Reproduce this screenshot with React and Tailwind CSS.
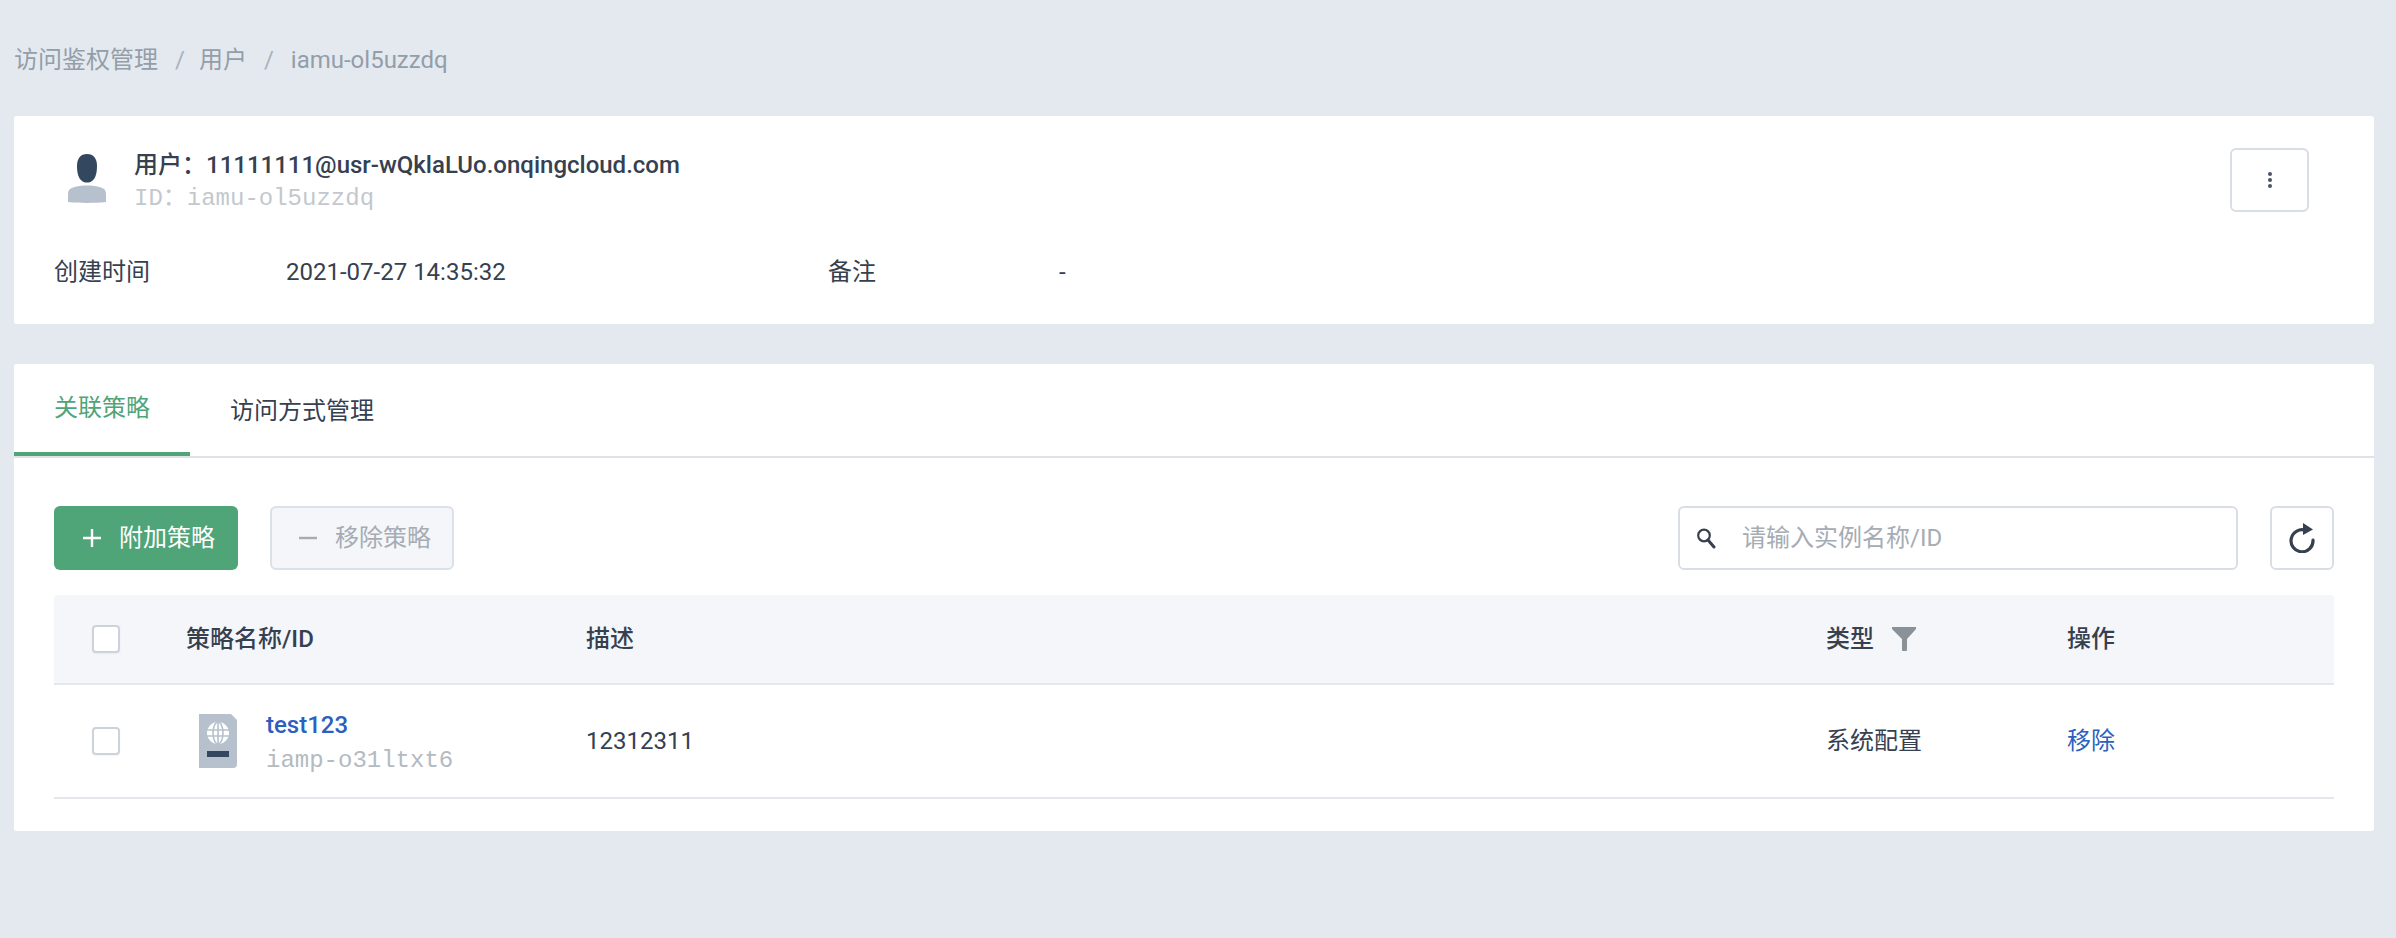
import React from "react";

const Person = () => (
  <svg width="40" height="52" viewBox="0 0 40 52" className="block">
    <path d="M20 0c6.500 0 10 4.500 10 12 0 8-2 13-5 15-1.500 1-3 1.500-5 1.500s-3.500-.5-5-1.500c-3-2-5-7-5-15C10 4.500 13.500 0 20 0z" fill="#33475f" />
    <path d="M1 48V40c0-3.500 1.500-5.500 5-6.500 4.500-1.500 9-2 14-2s9.500.5 14 2c3.500 1 5 3 5 6.500v8c-12 1.200-26 1.200-38 0z" fill="#b6c1cd" />
  </svg>
);

const Passport = () => (
  <svg width="38" height="54" viewBox="0 0 38 54" className="block">
    <path d="M0 0h32l6 6v44a4 4 0 0 1-4 4H0z" fill="#b6c1cd" />
    <circle cx="19" cy="19" r="11" fill="#fff" />
    <g fill="none" stroke="#b6c1cd" strokeWidth="1.600">
      <ellipse cx="19" cy="19" rx="5" ry="11" />
      <path d="M8 16h22M8 22h22M19 8v22" />
    </g>
    <rect x="8" y="37" width="22" height="6" fill="#33475f" />
  </svg>
);

const Kebab = () => (
  <svg width="6" height="18" viewBox="0 0 6 18" className="block">
    <circle cx="3" cy="3" r="2" fill="#4a5463" />
    <circle cx="3" cy="9" r="2" fill="#4a5463" />
    <circle cx="3" cy="15" r="2" fill="#4a5463" />
  </svg>
);

const Search = () => (
  <svg width="20" height="22" viewBox="0 0 20 22" className="block shrink-0">
    <circle cx="8" cy="8.500" r="5.800" fill="none" stroke="#36404f" strokeWidth="2.200" />
    <path d="M12 13l6 7" stroke="#36404f" strokeWidth="3" strokeLinecap="round" />
  </svg>
);

const Refresh = () => (
  <svg width="28" height="30" viewBox="0 0 28 30" className="block">
    <path d="M18 7.500A11 11 0 1 0 25 17" fill="none" stroke="#36404f" strokeWidth="3.200" strokeLinecap="round" />
    <path d="M15 0l10 6.500-10 5.500z" fill="#36404f" />
  </svg>
);

const Funnel = () => (
  <svg width="24" height="24" viewBox="0 0 24 24" className="block">
    <path d="M0 0h24v2L15 12v11a1 1 0 0 1-1 1h-3a1 1 0 0 1-1-1V12L0 2z" fill="#8b9199" />
  </svg>
);

const Check = () => (
  <div className="w-[28px] h-[28px] rounded-[4px] border-2 border-[#ccd3db] bg-white shadow-[0_1px_2px_rgba(0,0,0,0.05)] shrink-0" />
);

export default function App() {
  return (
    <div className="min-h-screen bg-[#e4e9f0] pl-[14px] pr-[22px] pt-[44px] text-[24px] text-[#36404f] font-['Roboto','Noto_Sans_CJK_SC',sans-serif] leading-[32px]">
      <div className="flex items-center h-[32px] mb-[40px] text-[#939ea9]">
        <span>访问鉴权管理</span>
        <span className="ml-[17px] mr-[14px] text-[#a9b2bc]">/</span>
        <span>用户</span>
        <span className="mx-[17px] text-[#a9b2bc]">/</span>
        <span>iamu-ol5uzzdq</span>
      </div>

      <section className="bg-white rounded-[3px] h-[208px] pt-[32px] pl-[40px] pr-[65px]">
        <div className="flex items-start justify-between h-[92px]">
          <div className="flex items-start pl-[13px] pt-[6px]">
            <Person />
            <div className="ml-[27px] -mt-[5px]">
              <div className="font-medium leading-[33px]">用户：11111111@usr-wQklaLUo.onqingcloud.com</div>
              <div className="leading-[33px] text-[#c2c8ce] font-['Liberation_Mono','Noto_Sans_CJK_SC',monospace] text-[24px]">ID：iamu-ol5uzzdq</div>
            </div>
          </div>
          <button className="w-[79px] h-[64px] rounded-[6px] border-2 border-[#d9dee4] bg-white flex items-center justify-center">
            <Kebab />
          </button>
        </div>
        <div className="flex items-center h-[32px] mt-[16px]">
          <span className="w-[232px]">创建时间</span>
          <span className="w-[542px]">2021-07-27 14:35:32</span>
          <span className="w-[231px]">备注</span>
          <span>-</span>
        </div>
      </section>

      <section className="mt-[40px] bg-white rounded-[3px] h-[467px]">
        <div className="flex h-[94px] border-b-2 border-[#dfe3e7]">
          <div className="w-[176px] h-[92px] flex items-center justify-center border-b-4 border-[#4fa478] text-[#4fa478]">关联策略</div>
          <div className="ml-[40px] h-[92px] flex items-center pt-[2px]">访问方式管理</div>
        </div>

        <div className="px-[40px] pt-[48px]">
          <div className="flex items-center">
            <button className="w-[184px] h-[64px] rounded-[6px] bg-[#4fa478] text-white flex items-center pl-[28px] gap-[17px]">
              <svg width="20" height="20" viewBox="0 0 20 20" className="block">
                <path d="M10 1v18M1 10h18" stroke="#fff" strokeWidth="2.400" />
              </svg>
              <span>附加策略</span>
            </button>
            <button className="ml-[32px] w-[184px] h-[64px] rounded-[6px] bg-[#f4f6f9] border-2 border-[#dbe1e8] text-[#a5acb4] flex items-center pl-[26px] gap-[17px]">
              <svg width="20" height="20" viewBox="0 0 20 20" className="block">
                <path d="M1 10h18" stroke="#a5acb4" strokeWidth="2.400" />
              </svg>
              <span>移除策略</span>
            </button>
            <div className="ml-auto w-[560px] h-[64px] rounded-[6px] border-2 border-[#d9dee4] bg-white flex items-center pl-[16px]">
              <Search />
              <span className="ml-[26px] text-[#a5acb4]">请输入实例名称/ID</span>
            </div>
            <button className="ml-[32px] w-[64px] h-[64px] rounded-[6px] border-2 border-[#d9dee4] bg-white flex items-center justify-center">
              <Refresh />
            </button>
          </div>

          <div className="mt-[25px] h-[90px] bg-[#f4f6f9] border-b-2 border-[#e4e8ec] rounded-t-[3px] flex items-center font-medium">
            <div className="w-[132px] pl-[38px]"><Check /></div>
            <div className="w-[400px]">策略名称/ID</div>
            <div className="w-[1240px]">描述</div>
            <div className="w-[241px] flex items-center gap-[18px]">
              <span>类型</span>
              <Funnel />
            </div>
            <div>操作</div>
          </div>

          <div className="h-[114px] border-b-2 border-[#e4e8ec] flex items-center">
            <div className="w-[145px] pl-[38px]"><Check /></div>
            <div className="w-[387px] flex items-center">
              <Passport />
              <div className="ml-[29px] pt-[4px]">
                <div className="text-[#2b5fc0] font-medium leading-[35px]">test123</div>
                <div className="text-[#b4bac1] font-['Liberation_Mono',monospace] text-[24px] leading-[35px]">iamp-o31ltxt6</div>
              </div>
            </div>
            <div className="w-[1240px]">12312311</div>
            <div className="w-[241px]">系统配置</div>
            <div className="text-[#2b5fc0]">移除</div>
          </div>
        </div>
      </section>
    </div>
  );
}
